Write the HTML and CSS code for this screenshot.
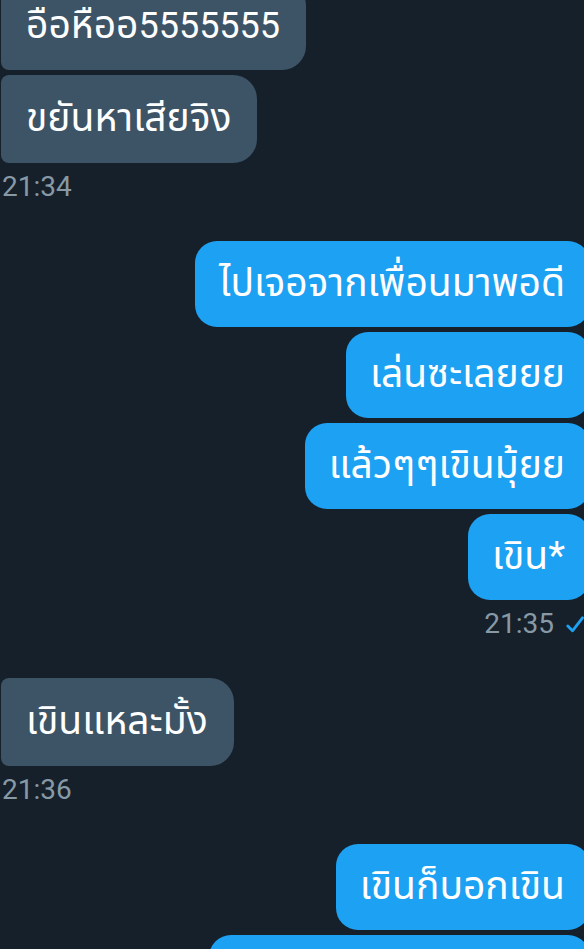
FILE: index.html
```html
<!DOCTYPE html>
<html lang="th">
<head>
<meta charset="utf-8">
<link rel="stylesheet" href="styles.css">
</head>
<body>
<div class="chat">
  <div class="group recv first">
    <div class="bubble">อือหืออ<span class="num">5555555</span></div>
    <div class="bubble">ขยันหาเสียจิง</div>
    <div class="time">21:34</div>
  </div>
  <div class="group sent">
    <div class="bubble">ไปเจอจากเพื่อนมาพอดี</div>
    <div class="bubble">เล่นซะเลยยย</div>
    <div class="bubble">แล้วๆๆเขินมุ้ยย</div>
    <div class="bubble">เขิน*</div>
    <div class="time">21:35 <svg class="check" width="18" height="17" viewBox="0 0 18 17"><path d="M1.8 10 L6.5 14.8 L16.5 1.8" fill="none" stroke="#1da1f2" stroke-width="2.8" stroke-linecap="round" stroke-linejoin="round"/></svg></div>
  </div>
  <div class="group recv">
    <div class="bubble">เขินแหละมั้ง</div>
    <div class="time">21:36</div>
  </div>
  <div class="group sent">
    <div class="bubble">เขินก็บอกเขิน</div>
    <div class="bubble last">ขอบคุณมากนะคะจ้าาา</div>
  </div>
</div>
</body>
</html>
```

FILE: styles.css
```css
html, body {
  margin: 0;
  padding: 0;
  background: #15202b;
  overflow: hidden;
  height: 949px;
}
.chat {
  display: flex;
  flex-direction: column;
  gap: 38px;
  font-family: Roboto, "Noto Sans Thai", "Noto Sans", sans-serif;
}
.group {
  display: flex;
  flex-direction: column;
  gap: 5px;
}
.group.first {
  margin-top: -18px;
}
.recv {
  align-items: flex-start;
}
.sent {
  align-items: flex-end;
  margin-right: -6px;
}
.bubble {
  box-sizing: border-box;
  display: flex;
  align-items: center;
  font-size: 39px;
  color: #ffffff;
  white-space: nowrap;
}
.num {
  font-size: 36px;
}
.recv .bubble {
  height: 88px;
  background: #3d5466;
  margin-left: 1px;
  padding: 0 26px 0 25px;
  border-radius: 8px 24px 24px 8px;
}
.sent .bubble {
  height: 86px;
  background: #1da1f2;
  padding: 0 25px 0 24px;
  border-radius: 22px;
}
.sent .bubble.last {
  padding-top: 30px;
}
.time {
  font-size: 28px;
  color: #8899a6;
  line-height: 32px;
  margin-top: 3px;
  display: flex;
  align-items: center;
  gap: 12px;
}
.recv .time {
  padding-left: 2px;
}
.sent .time {
  padding-right: 6px;
}
.check {
  display: block;
}
```
